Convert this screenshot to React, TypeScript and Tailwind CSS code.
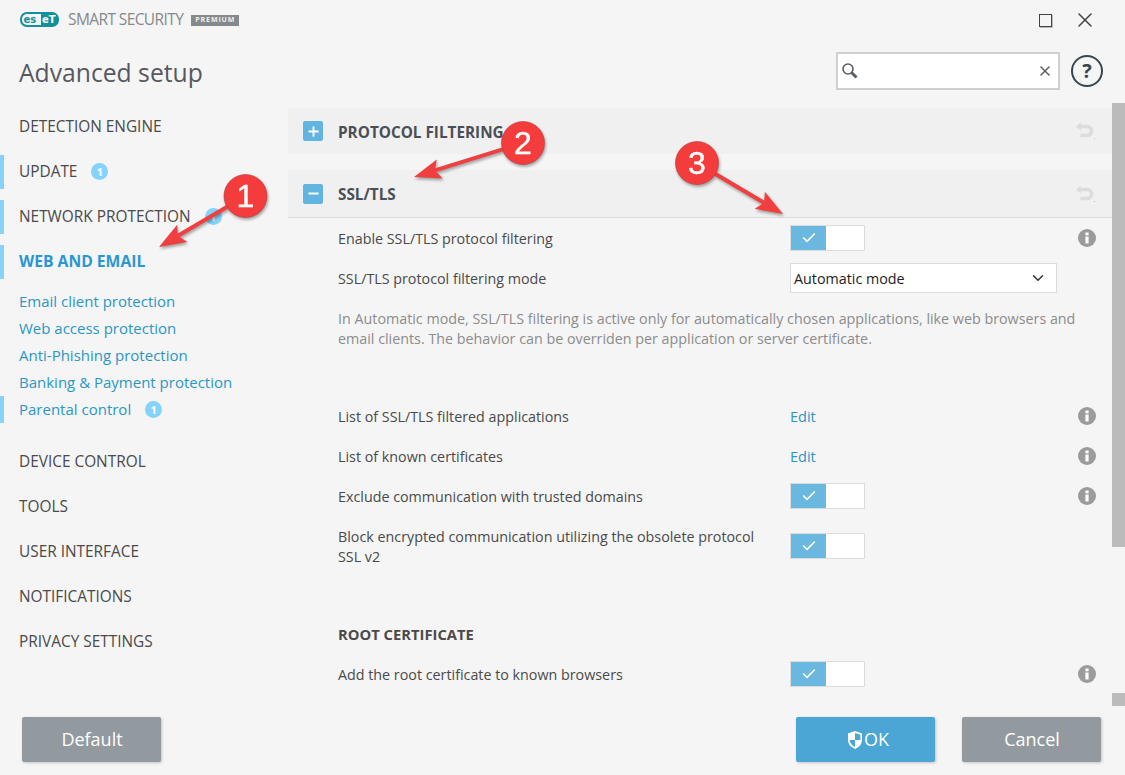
import React from 'react';
import { Check, ChevronDown, Minus, Plus, X } from 'lucide-react';

const font = { fontFamily: '"Open Sans", sans-serif' };

const Badge = ({ n }: { n: number }) => (
  <span className="ml-[14px] flex h-[17px] w-[17px] items-center justify-center rounded-full bg-[#85d3fb] text-[11px] font-bold leading-none text-white">
    {n}
  </span>
);

const NavItem = ({ label, mark, badge, active }: { label: string; mark?: boolean; badge?: number; active?: boolean }) => (
  <div className="flex h-[45px] items-center">
    <div className={mark ? 'h-[34px] w-[4px] bg-[#85d3fb]' : 'h-[34px] w-[4px]'} />
    <span className={active ? 'pl-[15px] text-[15.7px] font-bold text-[#2a97d2]' : 'pl-[15px] text-[15.4px] text-[#4a4a4a]'}>{label}</span>
    {badge ? <Badge n={badge} /> : null}
  </div>
);

const SubItem = ({ label, mark, badge }: { label: string; mark?: boolean; badge?: number }) => (
  <div className="flex h-[27px] items-center">
    <div className={mark ? 'h-[27px] w-[4px] bg-[#85d3fb]' : 'h-[27px] w-[4px]'} />
    <span className="pl-[15px] text-[15px] text-[#2a97c4]">{label}</span>
    {badge ? <Badge n={badge} /> : null}
  </div>
);

const Toggle = () => (
  <div className="flex h-[26px] w-[75px] border border-[#dcdcdc] bg-white">
    <div className="flex h-full w-[35px] items-center justify-center bg-[#6ab7e0]">
      <Check size={16} strokeWidth={2.5} className="text-white" />
    </div>
  </div>
);

const Info = () => (
  <svg width="18" height="18" viewBox="0 0 18 18">
    <circle cx="9" cy="9" r="9" fill="#9b9b9b" />
    <rect x="7.4" y="7.5" width="3.2" height="7" fill="#fff" />
    <rect x="7.4" y="3.5" width="3.2" height="2.8" fill="#fff" />
  </svg>
);

const Undo = () => (
  <svg width="20" height="18" viewBox="0 0 20 18" fill="none">
    <path d="M4.5 0.5 L0 5 L5.5 8.5 Z" fill="#dcdcdc" />
    <path d="M3.5 4.5 H11 A4.4 4.4 0 0 1 11 13.5 H4.5" stroke="#dcdcdc" strokeWidth="3.6" />
    <rect x="18" y="16" width="1" height="1" fill="#bdbdbd" />
  </svg>
);

const Row = ({ label, control, info, tall }: { label: string; control?: React.ReactNode; info?: boolean; tall?: boolean }) => (
  <div className={tall ? 'flex h-[60px] items-center pl-[50px]' : 'flex h-[40px] items-center pl-[50px]'}>
    <div className="w-[452px] pr-[20px] pt-px text-[14.3px] leading-[20px] text-[#4a4a4a]">{label}</div>
    <div className="w-[288px]">{control}</div>
    {info ? <Info /> : null}
  </div>
);

const EditLink = () => <span className="text-[14.5px] text-[#2a97c4]">Edit</span>;

const SectionHead = ({ label, open }: { label: string; open?: boolean }) => (
  <div className={open ? 'flex h-[48px] items-center border-b border-[#dcdcdc] bg-[#f0f0f0] pl-[15px] pr-[16px]' : 'flex h-[46px] items-center bg-[#f0f0f0] pl-[15px] pr-[16px]'}>
    <div className="flex h-[20px] w-[20px] items-center justify-center rounded-[2px] bg-[#62b5e0]">
      {open ? <Minus size={15} strokeWidth={3} className="text-white" /> : <Plus size={15} strokeWidth={3} className="text-white" />}
    </div>
    <span className="ml-[15px] flex-1 pt-[2px] text-[15.3px] font-bold text-[#4a4f57]">{label}</span>
    <Undo />
  </div>
);

const FootButton = ({ children, blue }: { children: React.ReactNode; blue?: boolean }) => (
  <button className={blue
    ? 'flex h-[45px] w-[139px] items-center justify-center rounded-[2px] bg-[#4ba6d6] text-[18px] text-white shadow-[1px_1px_3px_rgba(0,0,0,0.2)]'
    : 'flex h-[45px] w-[139px] items-center justify-center rounded-[2px] bg-[#939a9f] text-[18px] text-white shadow-[1px_1px_3px_rgba(0,0,0,0.2)]'}>
    {children}
  </button>
);

const Callout = ({ n, cx, cy, tx, ty }: { n: number; cx: number; cy: number; tx: number; ty: number }) => {
  const a = Math.atan2(ty - cy, tx - cx);
  const ux = Math.cos(a);
  const uy = Math.sin(a);
  const bx = tx - ux * 22;
  const by = ty - uy * 22;
  const head = `${tx},${ty} ${bx - uy * 10 - ux * 5},${by + ux * 10 - uy * 5} ${bx},${by} ${bx + uy * 10 - ux * 5},${by - ux * 10 - uy * 5}`;
  return (
    <g>
      <line x1={cx} y1={cy} x2={bx} y2={by} stroke="#ef3f3f" strokeWidth="4" />
      <polygon points={head} fill="#ef3f3f" />
      <circle cx={cx} cy={cy} r="21.5" fill="#f43c3c" stroke="#b03a3a" strokeWidth="0.6" />
      <text x={cx} y={cy + 11} textAnchor="middle" fontSize="32" fill="#fff" stroke="#fff" strokeWidth="0.4" style={{ fontFamily: '"Liberation Sans", sans-serif' }}>
        {n}
      </text>
    </g>
  );
};

export default function App() {
  return (
    <div className="relative flex h-[775px] w-[1125px] flex-col overflow-hidden bg-[#f5f5f5]" style={font}>
      {/* header */}
      <div className="h-[103px] shrink-0">
        <div className="flex h-[40px] items-center pl-[20px]">
          <svg width="40" height="15" viewBox="0 0 40 15" className="mt-[-1px]">
            <rect x="1" y="1" width="37" height="13" rx="6" fill="none" stroke="#12919b" strokeWidth="2" />
            <path d="M21 1 H32 A6 6 0 0 1 32 14 H21 Z" fill="#12919b" />
            <text x="3.5" y="11" fontSize="10" fontWeight="700" fill="#12919b" style={{ fontFamily: '"DejaVu Sans", sans-serif' }}>es</text>
            <text x="22" y="11" fontSize="10" fontWeight="700" fill="#fff" style={{ fontFamily: '"DejaVu Sans", sans-serif' }}>eT</text>
          </svg>
          <span className="ml-[8px] text-[15.5px] tracking-[-0.6px] text-[#85898c]">SMART SECURITY</span>
          <span className="ml-[8px] flex h-[11px] items-center bg-[#85898c] px-[4px] text-[7px] font-bold tracking-[0.9px] text-[#f0f0f0]">PREMIUM</span>
          <div className="ml-auto mr-[28px] flex items-center gap-[21px]">
            <div className="h-[13px] w-[13px] border border-[#444] shadow-[1px_1px_0_#bbb]" />
            <X size={24} strokeWidth={1.5} className="text-[#444]" />
          </div>
        </div>
        <div className="flex items-start pl-[19px] pr-[22px] pt-[12px]">
          <span className="mt-[2px] text-[24.7px] leading-[38px] text-[#55595f]">Advanced setup</span>
          <div className="ml-auto flex h-[38px] w-[224px] items-center justify-between border-2 border-[#cfcfcf] bg-white pl-[3px] pr-[5px]">
            <svg width="18" height="18" viewBox="0 0 18 18" fill="none">
              <circle cx="7" cy="7" r="5" stroke="#5a5f66" strokeWidth="1.6" />
              <path d="M10.5 10.5 L15.5 15.5" stroke="#5a5f66" strokeWidth="3" />
            </svg>
            <X size={16} strokeWidth={2.4} className="text-[#5f6368]" />
          </div>
          <div className="ml-[11px] mt-[3px] flex h-[32px] w-[32px] items-center justify-center rounded-full border-2 border-[#37474f] text-[20px] font-bold leading-none text-[#37474f]">?</div>
        </div>
      </div>

      {/* main */}
      <div className="flex h-[603px] shrink-0">
        <nav className="w-[288px] shrink-0 pt-px">
          <NavItem label="DETECTION ENGINE" />
          <NavItem label="UPDATE" mark badge={1} />
          <NavItem label="NETWORK PROTECTION" mark badge={1} />
          <NavItem label="WEB AND EMAIL" mark active />
          <div className="mt-[4px] mb-[16px]">
            <SubItem label="Email client protection" />
            <SubItem label="Web access protection" />
            <SubItem label="Anti-Phishing protection" />
            <SubItem label="Banking & Payment protection" />
            <SubItem label="Parental control" mark badge={1} />
          </div>
          <NavItem label="DEVICE CONTROL" />
          <NavItem label="TOOLS" />
          <NavItem label="USER INTERFACE" />
          <NavItem label="NOTIFICATIONS" />
          <NavItem label="PRIVACY SETTINGS" />
        </nav>
        <div className="w-[824px] shrink-0 overflow-hidden pt-[5px]">
          <SectionHead label="PROTOCOL FILTERING" />
          <div className="h-[16px]" />
          <SectionHead label="SSL/TLS" open />
          <Row label="Enable SSL/TLS protocol filtering" control={<Toggle />} info />
          <Row
            label="SSL/TLS protocol filtering mode"
            control={
              <div className="flex h-[30px] w-[267px] items-center justify-between border border-[#dcdcdc] bg-white pl-[3px] pr-[9px] pt-[2px] text-[14.3px] text-[#222]">
                Automatic mode
                <ChevronDown size={18} className="mt-[-2px] text-[#333]" />
              </div>
            }
          />
          <p className="mb-[47px] mt-[10px] w-[800px] pl-[50px] pr-[10px] pt-px text-[14.3px] leading-[20px] text-[#8c8c8c]">
            In Automatic mode, SSL/TLS filtering is active only for automatically chosen applications, like web browsers and email clients. The behavior can be overriden per application or server certificate.
          </p>
          <Row label="List of SSL/TLS filtered applications" control={<EditLink />} info />
          <Row label="List of known certificates" control={<EditLink />} info />
          <Row label="Exclude communication with trusted domains" control={<Toggle />} info />
          <Row label="Block encrypted communication utilizing the obsolete protocol SSL v2" control={<Toggle />} tall />
          <div className="mt-[38px] flex h-[40px] items-center pt-px pl-[50px] text-[14.75px] font-bold text-[#4a4a4a]">ROOT CERTIFICATE</div>
          <Row label="Add the root certificate to known browsers" control={<Toggle />} info />
        </div>
        <div className="flex w-[13px] shrink-0 flex-col justify-between">
          <div className="h-[444px] bg-[#bbbbbb]" />
          <div className="h-[13px] bg-[#bbbbbb]" />
        </div>
      </div>

      {/* footer */}
      <div className="flex flex-1 items-start pl-[22px] pr-[24px] pt-[11px]">
        <FootButton>
          <span className="pl-px">Default</span>
        </FootButton>
        <div className="ml-auto flex gap-[27px]">
          <FootButton blue>
            <svg width="16" height="20" viewBox="0 0 16 20" className="ml-[5px] mr-px">
              <path d="M8 1 L15 3.5 V10 C15 14.5 11.5 17.5 8 19 C4.5 17.5 1 14.5 1 10 V3.5 Z" fill="#fff" />
              <path d="M8 3 V10 H13.4 V4.8 Z M8 10 H2.6 C3 13.5 5.5 15.8 8 17 Z" fill="#4ba6d6" />
            </svg>
            OK
          </FootButton>
          <FootButton>
            <span className="pl-px">Cancel</span>
          </FootButton>
        </div>
      </div>

      {/* red annotations on top of the screenshot */}
      <svg className="absolute left-0 top-0" width="1125" height="775" style={{ filter: 'drop-shadow(1px 2px 1.5px rgba(0,0,0,0.35))' }}>
        <Callout n={1} cx={245.5} cy={196} tx={159} ty={247} />
        <Callout n={2} cx={523} cy={143} tx={414} ty={177} />
        <Callout n={3} cx={697} cy={163} tx={783} ty={214} />
      </svg>
    </div>
  );
}
